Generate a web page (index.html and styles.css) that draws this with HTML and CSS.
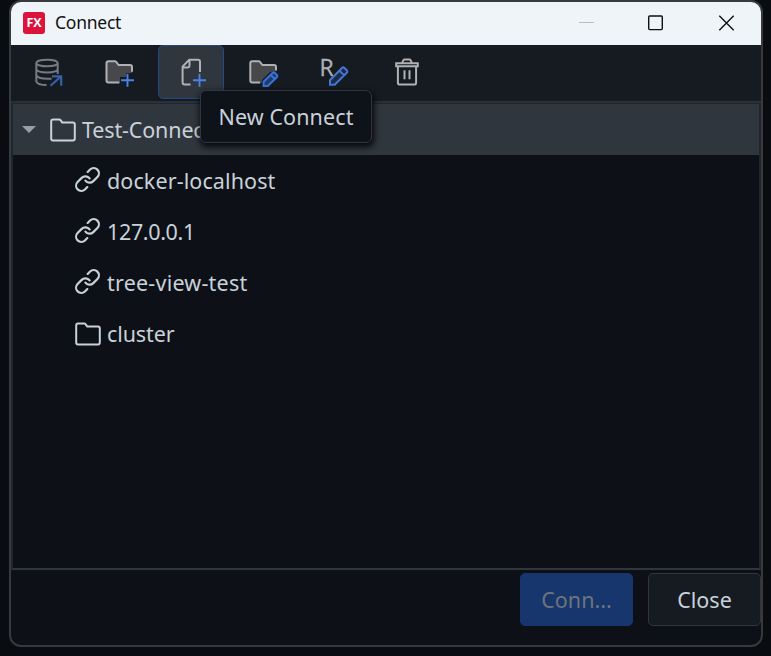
FILE: index.html
```html
<!DOCTYPE html>
<html lang="en">
<head>
<meta charset="utf-8">
<title>Connect</title>
<link rel="stylesheet" href="styles.css">
</head>
<body>
<svg class="defs" width="0" height="0">
  <symbol id="folder" viewBox="0 0 26 26"><path d="M1.2 4.4Q1.2 2.5 3.1 2.5H9.2Q10.1 2.5 10.7 3.3L12.2 5.4H22.9Q24.8 5.4 24.8 7.3V21.6Q24.8 23.5 22.9 23.5H3.1Q1.2 23.5 1.2 21.6Z"/></symbol>
  <symbol id="link" viewBox="0 0 24 24"><path d="M10 13a5 5 0 0 0 7.54.54l4-4a5 5 0 0 0-7.07-7.07l-2.3 2.28M14 11a5 5 0 0 0-7.54-.54l-4 4a5 5 0 0 0 7.07 7.07l2.28-2.28" /></symbol>
</svg>
<main class="window">
  <header class="titlebar">
    <span class="logo">FX</span>
    <span class="title">Connect</span>
    <svg class="controls" width="156" height="16" viewBox="0 0 156 16">
      <path class="min" d="M0 7.5H15"/>
      <rect x="69.7" y="1" width="13.6" height="13.6" rx="1"/>
      <path d="M140.3 .8L154.7 15.2M154.7 .8L140.3 15.2"/>
    </svg>
  </header>
  <nav class="toolbar">
    <button class="tool dim" aria-label="Open">
      <svg class="icon" viewBox="0 0 30 30">
        <path d="M4.3 6C4.3 1.6 25.7 1.6 25.7 6S4.3 10.4 4.3 6V24.5Q5.5 28 14.5 28M25.7 6V17M4.3 12.2C5 16.6 25 16.6 25.7 12.2M4.3 18.3Q6 21.7 15 21.7H19.5"/>
        <path class="accent" d="M18.5 28.7L28.7 19.8M20 19.4H29.2V28.7"/>
      </svg>
    </button>
    <button class="tool" aria-label="New Folder">
      <svg class="icon" viewBox="0 0 30 30">
        <path class="fill" d="M4.5 4.2H11L14.5 8H26.3Q28 8 28 10V16H22V20H16V25.4H4.5Q2.5 25.4 2.5 23.4V6.2Q2.5 4.2 4.5 4.2Z"/>
        <path d="M15.4 25.4H4.5Q2.5 25.4 2.5 23.4V6.2Q2.5 4.2 4.5 4.2H10.8Q11.6 4.2 12.2 4.9L14.6 8H26Q28 8 28 10V14.7"/>
        <path class="accent" d="M23.5 16.8V29.8M17 23.3H30"/>
      </svg>
    </button>
    <button class="tool selected" aria-label="New Connect">
      <svg class="icon" viewBox="0 0 30 30">
        <path d="M14.5 27.6H8.6Q6.6 27.6 6.6 25.6V9.6L13.2 2.8H22Q24 2.8 24 4.8V15M6.8 10.5H11.5Q13.5 10.5 13.5 8.5V3"/>
        <path class="accent" d="M23.5 16.8V29.8M17 23.3H30"/>
      </svg>
    </button>
    <button class="tool" aria-label="Edit Folder">
      <svg class="icon" viewBox="0 0 30 30">
        <path class="fill" d="M4.3 4.2H11L14.5 8H26.3Q28 8 28 10V14L22 15L14 23V25.4H4.3Q2.3 25.4 2.3 23.4V6.2Q2.3 4.2 4.3 4.2Z"/>
        <path d="M12.2 25.4H4.3Q2.3 25.4 2.3 23.4V6.2Q2.3 4.2 4.3 4.2H10.6Q11.4 4.2 12 4.9L14.4 8H26Q28 8 28 10V13.5"/>
        <path class="pencil" d="M15.6 24.7L24.8 15.7Q25.8 15 26.7 15.8L29 18.1Q29.8 19 29 20L19.8 29H15.6ZM22.6 17.9L26.8 22"/>
      </svg>
    </button>
    <button class="tool" aria-label="Rename">
      <svg class="icon" viewBox="0 0 30 30">
        <text x="-.6" y="18.8">R</text>
        <path class="pencil light" d="M10 23.3L22.2 10.8Q23.2 9.9 24.2 10.8L27 13.5Q27.8 14.5 27 15.5L14.7 27.7H10ZM19.4 13.7L24.2 18.4"/>
      </svg>
    </button>
    <button class="tool" aria-label="Delete">
      <svg class="icon" viewBox="0 0 30 30">
        <path d="M4.2 6.2H25.8V9.3H4.2ZM10 6.2L11.3 3.4Q11.7 2.6 12.6 2.6H17.4Q18.3 2.6 18.7 3.4L20 6.2M5.9 9.5V25.4Q5.9 27.6 8.1 27.6H21.9Q24.1 27.6 24.1 25.4V9.5M12.5 13.3V22.2M17.5 13.3V22.2"/>
      </svg>
    </button>
    <div class="tooltip">New Connect</div>
  </nav>
  <section class="tree">
    <div class="row root"><span class="caret"></span><svg class="glyph"><use href="#folder"/></svg><span class="root-name">Test-Connect</span></div>
    <div class="row"><svg class="glyph link"><use href="#link"/></svg><span class="host">docker-localhost</span></div>
    <div class="row"><svg class="glyph link"><use href="#link"/></svg><span class="address">127.0.0.1</span></div>
    <div class="row"><svg class="glyph link"><use href="#link"/></svg><span class="host wide">tree-view-test</span></div>
    <div class="row"><svg class="glyph"><use href="#folder"/></svg><span class="group">cluster</span></div>
  </section>
  <footer class="actions">
    <button class="btn primary" disabled>Conn...</button>
    <button class="btn">Close</button>
  </footer>
</main>
</body>
</html>
```
FILE: styles.css
```css
* { box-sizing: border-box; }
body {
  margin: 0;
  height: 656px;
  overflow: hidden;
  background: #090c10;
  font-family: "Noto Sans", "Open Sans", sans-serif;
  font-size: 21.5px;
  color: #c9d1d9;
}
button { font: inherit; color: inherit; margin: 0; padding: 0; }
.defs { display: block; }
.window {
  width: 754px;
  height: 647px;
  margin-left: 9px;
  border: 2px solid #38393c;
  border-radius: 12px;
  background: #0d1117;
  display: flex;
  flex-direction: column;
}
.titlebar {
  height: 43px;
  flex: none;
  display: flex;
  align-items: center;
  padding: 0 26px 2px 12px;
  background: #eff4f9;
  border-radius: 10px 10px 0 0;
  color: #111;
}
.logo {
  width: 22px;
  height: 22px;
  border-radius: 3px;
  background: #dc143c;
  color: #fff;
  font: bold 12.5px/22px "Open Sans", sans-serif;
  text-align: center;
}
.title { margin-left: 10px; font-size: 17.5px; line-height: 22px; padding-bottom: 1px; letter-spacing: -.25px; }
.controls { margin-left: auto; fill: none; stroke: #111; stroke-width: 1.4; }
.controls .min { stroke: #b9bdc2; stroke-width: 1; }
.toolbar {
  position: relative;
  height: 58px;
  flex: none;
  display: flex;
  gap: 6px;
  padding-left: 3px;
  background: #161b22;
  border-bottom: 2px solid #2a3037;
}
.tool {
  width: 66px;
  height: 54px;
  display: grid;
  place-items: center;
  border: 1px solid transparent;
  border-radius: 5px;
  background: none;
}
.tool.selected { background: #30363d; border-color: #1f4b88; }
.icon { width: 30px; height: 30px; fill: none; stroke: #afb1b3; stroke-width: 2; overflow: visible; }
.icon .fill { fill: #46484c; stroke: none; }
.icon .accent { stroke: #4b82e8; stroke-width: 1.9; }
.icon .pencil { fill: #253a68; stroke: #3872dc; stroke-width: 2; }
.icon .pencil.light { fill: #1d2b49; stroke: #4477d2; }
.icon text { fill: #afb1b3; stroke: #afb1b3; stroke-width: .3; font: 23px "Open Sans", sans-serif; }
.dim .icon { stroke: #777a80; }
.dim .icon .accent { stroke: #3860ab; stroke-width: 2.1; }
.tooltip {
  position: absolute;
  z-index: 1;
  left: 189px;
  top: 45px;
  width: 172px;
  height: 53px;
  border: 1px solid #30363d;
  border-radius: 6px;
  background: #0e1219;
  box-shadow: 1px 3px 6px 1px #05070b;
  text-align: center;
  line-height: 51px;
  letter-spacing: .1px;
}
.tree {
  height: 467px;
  flex: none;
  border: 1px solid #21262d;
  border-left-width: 2px;
  border-right-width: 2px;
  border-bottom: 2px solid #30363d;
}
.row {
  height: 51px;
  display: flex;
  align-items: center;
  padding-left: 62px;
  white-space: nowrap;
}
.root { padding-left: 9px; background: #30363d; }
.root-name { letter-spacing: -.15px; }
.host { letter-spacing: .1px; }
.host.wide { letter-spacing: .22px; }
.address { letter-spacing: -.35px; }
.group { letter-spacing: -.1px; }
.caret {
  width: 14px;
  height: 7px;
  margin-right: 14px;
  background: #989da7;
  clip-path: polygon(0 0, 100% 0, 50% 100%);
}
.glyph {
  width: 26px;
  height: 26px;
  margin-right: 6px;
  fill: none;
  stroke: #c9d1d9;
  stroke-width: 2;
  overflow: visible;
}
.link { width: 25px; height: 25px; margin: 0 7px 2px 0; stroke-linecap: round; stroke-width: 2.1; }
.actions {
  display: flex;
  justify-content: flex-end;
  gap: 15px;
  padding-top: 3px;
}
.btn {
  width: 113px;
  height: 53px;
  border: 1px solid #30363d;
  border-radius: 5px;
  background: #161b22;
}
.primary { background: #16366d; border-color: #16366d; color: #6d747c; }
```
